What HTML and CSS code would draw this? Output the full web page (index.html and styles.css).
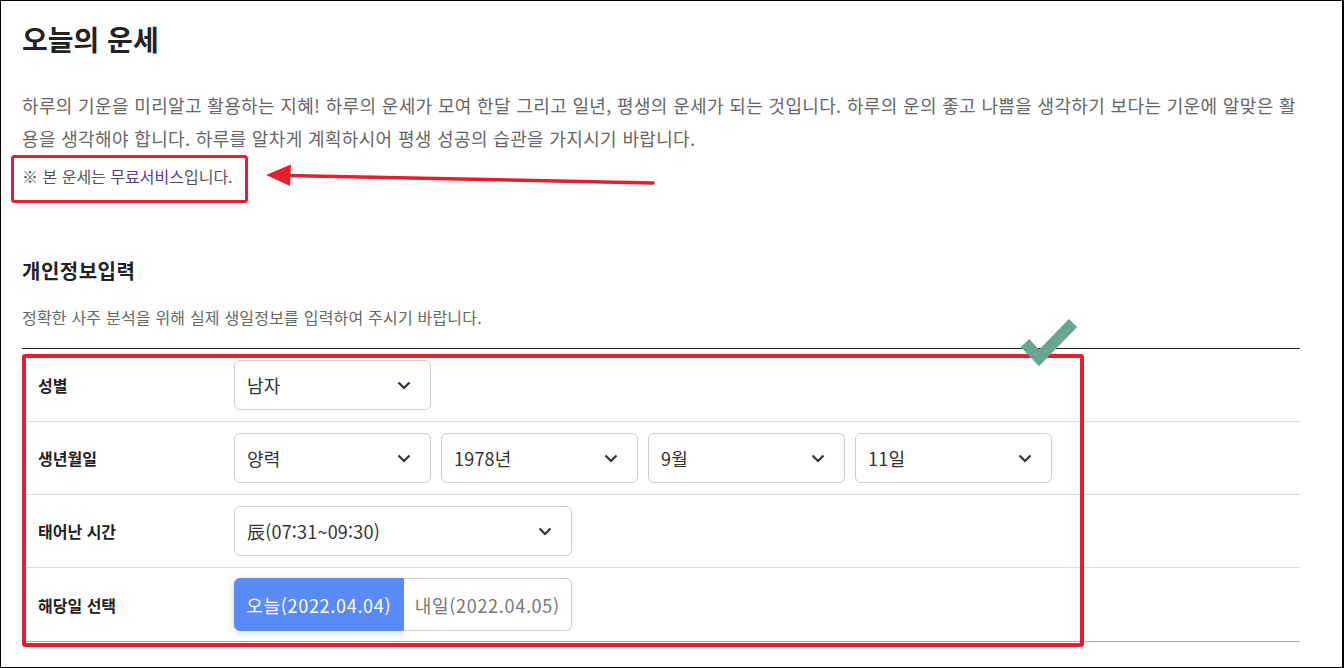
FILE: index.html
```html
<!DOCTYPE html>
<html lang="ko">
<head>
<meta charset="utf-8">
<title>오늘의 운세</title>
<link rel="stylesheet" href="styles.css">
</head>
<body>
<div class="page">
  <h1 class="title">오늘의 운세</h1>
  <p class="intro">하루의 기운을 미리알고 활용하는 지혜! 하루의 운세가 모여 한달 그리고 일년, 평생의 운세가 되는 것입니다. 하루의 운의 좋고 나쁨을 생각하기 보다는 기운에 알맞은 활용을 생각해야 합니다. 하루를 알차게 계획하시어 평생 성공의 습관을 가지시기 바랍니다.</p>
  <p class="note">※ 본 운세는 <a class="note-link" href="#">무료서비스</a>입니다.</p>

  <h2 class="section-title">개인정보입력</h2>
  <p class="section-desc">정확한 사주 분석을 위해 실제 생일정보를 입력하여 주시기 바랍니다.</p>

  <div class="form-table">
    <div class="form-row">
      <div class="form-label">성별</div>
      <div class="form-field">
        <div class="select w197"><span>남자</span><svg class="chev" viewBox="0 0 14 9"><path d="M1.5 1.5 L7 7 L12.5 1.5"/></svg></div>
      </div>
    </div>
    <div class="form-row">
      <div class="form-label">생년월일</div>
      <div class="form-field">
        <div class="select w197"><span>양력</span><svg class="chev" viewBox="0 0 14 9"><path d="M1.5 1.5 L7 7 L12.5 1.5"/></svg></div>
        <div class="select w197"><span>1978년</span><svg class="chev" viewBox="0 0 14 9"><path d="M1.5 1.5 L7 7 L12.5 1.5"/></svg></div>
        <div class="select w197"><span>9월</span><svg class="chev" viewBox="0 0 14 9"><path d="M1.5 1.5 L7 7 L12.5 1.5"/></svg></div>
        <div class="select w197"><span>11일</span><svg class="chev" viewBox="0 0 14 9"><path d="M1.5 1.5 L7 7 L12.5 1.5"/></svg></div>
      </div>
    </div>
    <div class="form-row">
      <div class="form-label">태어난 시간</div>
      <div class="form-field">
        <div class="select w338"><span>辰(07:31~09:30)</span><svg class="chev" viewBox="0 0 14 9"><path d="M1.5 1.5 L7 7 L12.5 1.5"/></svg></div>
      </div>
    </div>
    <div class="form-row">
      <div class="form-label">해당일 선택</div>
      <div class="form-field">
        <div class="seg">
          <button class="seg-btn active">오늘(2022.04.04)</button>
          <button class="seg-btn">내일(2022.04.05)</button>
        </div>
      </div>
    </div>
  </div>

  <svg class="annotations" viewBox="0 0 1344 668" width="1344" height="668">
    <rect x="12.5" y="156.5" width="234" height="45" rx="2" class="ann-box ann-small"/>
    <line x1="653" y1="183" x2="286" y2="175.5" class="ann-line"/>
    <polygon points="266,175 291,164.5 290,186" class="ann-head"/>
    <rect x="24" y="356" width="1058" height="289" rx="1" class="ann-box ann-big"/>
    <polyline points="1025,343 1039,358 1073,323" class="ann-check"/>
  </svg>
</div>
</body>
</html>
```

FILE: styles.css
```css
* { box-sizing: border-box; }
html, body { margin: 0; padding: 0; background: #fff; }
body {
  font-family: "Noto Sans CJK KR", "Noto Sans", "Liberation Sans", sans-serif;
  color: #333;
}
.page {
  position: relative;
  width: 1344px;
  height: 668px;
  border: 1px solid #000;
  border-right-width: 2px;
  padding: 20px 42px 0 21px;
  overflow: hidden;
}
.title {
  margin: 0;
  font-size: 28px;
  line-height: 36px;
  font-weight: 700;
  color: #222;
}
.intro {
  margin: 32px 0 0;
  font-size: 18px;
  letter-spacing: 0.35px;
  line-height: 33px;
  color: #666;
}
.note {
  margin: 5px 0 0;
  font-size: 16px;
  line-height: 33px;
  color: #555;
}
.note-link { color: #55399a; text-decoration: none; }
.section-title {
  margin: 64px 0 0;
  font-size: 20px;
  letter-spacing: 0.5px;
  line-height: 28px;
  font-weight: 700;
  color: #222;
}
.section-desc {
  margin: 21px 0 0;
  font-size: 16px;
  letter-spacing: 0.2px;
  line-height: 22px;
  color: #666;
}
.form-table {
  margin-top: 20px;
  border-top: 1px solid #222;
  border-bottom: 1px solid #aaa;
}
.form-row {
  display: flex;
  align-items: center;
  height: 73px;
  border-bottom: 1px solid #ddd;
}
.form-row:last-child { border-bottom: none; height: 73px; }
.form-label {
  width: 212px;
  padding-left: 16px;
  font-size: 16px;
  font-weight: 700;
  color: #222;
}
.form-field { display: flex; gap: 10px; align-items: center; }
.select {
  display: flex;
  align-items: center;
  justify-content: space-between;
  height: 50px;
  border: 1px solid #ccc;
  border-radius: 6px;
  padding: 0 19px 0 12px;
  font-size: 18px;
  letter-spacing: 0.2px;
  color: #333;
  background: #fff;
}
.w197 { width: 197px; }
.w338 { width: 338px; }
.chev {
  width: 14px;
  height: 9px;
  fill: none;
  stroke: #333;
  stroke-width: 2.2;
}
.seg { display: flex; width: 338px; height: 53px; }
.seg-btn {
  flex: 1;
  font-family: inherit;
  font-size: 18px;
  letter-spacing: 0.7px;
  border: 1px solid #ccc;
  background: #fff;
  color: #777;
  padding: 0;
}
.seg-btn:first-child { border-radius: 6px 0 0 6px; }
.seg-btn:last-child { border-radius: 0 6px 6px 0; border-left: none; }
.seg-btn.active {
  background: #5a8af6;
  border-color: #5a8af6;
  color: #fff;
  box-shadow: 0 2px 8px rgba(90, 138, 246, 0.3);
}
.annotations {
  position: absolute;
  left: -1px;
  top: -1px;
  pointer-events: none;
}
.ann-box { fill: none; stroke: #e2202f; }
.ann-small { stroke-width: 3; }
.ann-big { stroke-width: 4; }
.ann-line { stroke: #e2202f; stroke-width: 3.5; stroke-linecap: round; }
.ann-head { fill: #e2202f; }
.ann-check { fill: none; stroke: #69a68f; stroke-width: 11.5; stroke-linejoin: miter; stroke-linecap: butt; }
```
